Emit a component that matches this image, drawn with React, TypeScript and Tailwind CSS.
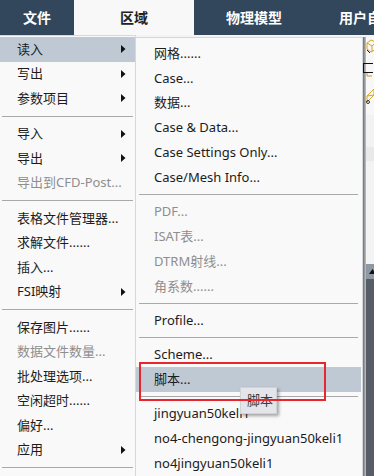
type Item = { label: string; arrow?: boolean; disabled?: boolean; active?: boolean } | 'sep';

const leftItems: Item[] = [
  { label: '读入', arrow: true, active: true },
  { label: '写出', arrow: true },
  { label: '参数项目', arrow: true },
  'sep',
  { label: '导入', arrow: true },
  { label: '导出', arrow: true },
  { label: '导出到CFD-Post...', disabled: true },
  'sep',
  { label: '表格文件管理器...' },
  { label: '求解文件......' },
  { label: '插入...' },
  { label: 'FSI映射', arrow: true },
  'sep',
  { label: '保存图片......' },
  { label: '数据文件数量...', disabled: true },
  { label: '批处理选项...' },
  { label: '空闲超时......' },
  { label: '偏好...' },
  { label: '应用', arrow: true },
  'sep',
];

const subItems: Item[] = [
  { label: '网格......' },
  { label: 'Case...' },
  { label: '数据...' },
  { label: 'Case & Data...' },
  { label: 'Case Settings Only...' },
  { label: 'Case/Mesh Info...' },
  'sep',
  { label: 'PDF...', disabled: true },
  { label: 'ISAT表...', disabled: true },
  { label: 'DTRM射线...', disabled: true },
  { label: '角系数......', disabled: true },
  'sep',
  { label: 'Profile...' },
  'sep',
  { label: 'Scheme...' },
  { label: '脚本...', active: true },
  'sep',
  { label: 'jingyuan50keli1' },
  { label: 'no4-chengong-jingyuan50keli1' },
  { label: 'no4jingyuan50keli1' },
];

function Arrow() {
  return (
    <svg width="5" height="8" viewBox="0 0 5 8" className="shrink-0">
      <polygon points="0,0 4.5,4 0,8" fill="#111" />
    </svg>
  );
}

function LeftMenu() {
  return (
    <div className="w-[136px] shrink-0 bg-[#f9f9f9] border-t border-r border-[#d3d8de] pt-[1px] h-full">
      {leftItems.map((it, i) =>
        it === 'sep' ? (
          <div key={i} className="h-[11px] flex items-center px-[2px]">
            <div className="h-px w-full bg-[#a9a9a9]" />
          </div>
        ) : (
          <div
            key={i}
            className={`h-[24.5px] flex items-center justify-between pl-[17px] pr-[9px] ${
              it.active ? 'bg-[#bfc9d4]' : ''
            } ${it.disabled ? 'text-[#8e8e8e]' : 'text-[#1c1c1c]'}`}
          >
            <span>{it.label}</span>
            {it.arrow && <Arrow />}
          </div>
        )
      )}
    </div>
  );
}

function SubMenu() {
  return (
    <div className="w-[227px] shrink-0 bg-[#f9f9f9] border-t border-r border-[#d3d8de] mt-[2px] pt-[3px] h-full">
      {subItems.map((it, i) =>
        it === 'sep' ? (
          <div key={i} className="h-[9.5px] flex items-center pl-[3px] pr-[4px]">
            <div className="h-px w-full bg-[#a9a9a9]" />
          </div>
        ) : (
          <div
            key={i}
            className={`h-[24.8px] flex items-center pl-[18px] mr-[1px] ${
              it.active ? 'bg-[#bfc9d4]' : ''
            } ${it.disabled ? 'text-[#8e8e8e]' : 'text-[#1c1c1c]'}`}
          >
            {it.label}
          </div>
        )
      )}
    </div>
  );
}

function SideStrip() {
  return (
    <div className="flex-1 flex h-full mt-[2px]">
      <div className="w-[3px] h-full bg-linear-to-r from-[#6f6f6f] to-[#c4c4c4]" />
      <div className="flex-1 flex flex-col h-full">
        <div className="h-[78px] bg-[#f7f7f7] flex flex-col pt-[1px]">
          <svg width="10" height="16" viewBox="0 0 10 16">
            <path d="M1 5 L5 2 L10 4 L10 11 L5 14 L1 11 Z M1 5 L6 8 L10 4 M6 8 L6 14" fill="none" stroke="#d9a420" strokeWidth="1" />
            <path d="M1 12 L4 15" stroke="#222" strokeWidth="1" />
          </svg>
          <svg width="10" height="14" viewBox="0 0 10 14" className="mt-[9px] -ml-[3px]">
            <rect x="0.5" y="0.5" width="11" height="9" fill="none" stroke="#111" />
            <path d="M4 10 L4 13 L9 13" fill="none" stroke="#e09020" strokeWidth="1" />
          </svg>
          <svg width="10" height="18" viewBox="0 0 10 18" className="mt-[9px]">
            <path d="M1 10 L8 3 L8 9 L1 16 Z M1 10 L8 9" fill="none" stroke="#d9a420" strokeWidth="1" />
            <circle cx="2" cy="16" r="1.5" fill="none" stroke="#333" />
          </svg>
        </div>
        <div className="h-[32px] bg-[#f2f2f2]" />
        <div className="h-[14px] bg-[#e9e9e9]" />
        <div className="h-[103px] bg-[#f3f3f3]" />
        <div className="h-[15px] bg-[#8e99a3] flex items-center pl-[3px]">
          <svg width="7" height="5" viewBox="0 0 7 5">
            <polygon points="0,5 3.5,0 7,5" fill="#111" />
          </svg>
        </div>
        <div className="flex-1 bg-[#565d68]" />
      </div>
    </div>
  );
}

export default function App() {
  return (
    <div className="relative w-[374px] h-[476px] overflow-hidden bg-[#f4f4f4] text-[13px] leading-none font-['Noto_Sans','Noto_Sans_CJK_SC',sans-serif]">
      <div className="flex h-[35px] bg-[#33475c] text-[14px] font-bold text-white whitespace-nowrap">
        <div className="w-[74px] shrink-0 flex items-center justify-center">文件</div>
        <div className="w-[120px] shrink-0 flex items-center justify-center bg-[#f8f8f8] text-[#222]">区域</div>
        <div className="w-[120px] shrink-0 flex items-center justify-center">物理模型</div>
        <div className="w-[120px] shrink-0 flex items-center justify-center">用户自定义</div>
      </div>

      <div className="flex h-[441px] whitespace-nowrap">
        <LeftMenu />
        <SubMenu />
        <SideStrip />
      </div>

      <div className="absolute left-[240px] top-[387px] w-[37px] h-[27px] bg-[#e3e5e8] border border-[#cfd2d6] shadow-[2px_2px_3px_rgba(0,0,0,0.35)] flex items-center pl-[6px] text-[#3a3a3a]">
        脚本
      </div>

      <div className="absolute left-[139px] top-[362px] w-[187px] h-[39px] border-2 border-[#e8262e]" />
    </div>
  );
}
